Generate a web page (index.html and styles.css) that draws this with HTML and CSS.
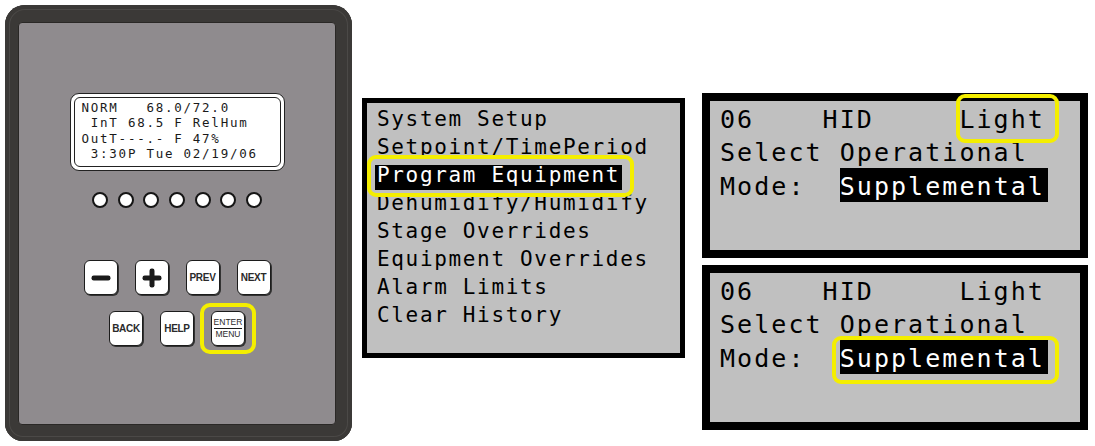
FILE: index.html
```html
<!DOCTYPE html>
<html lang="en">
<head>
<meta charset="utf-8">
<title>Controller menu</title>
<link rel="stylesheet" href="styles.css">
</head>
<body>
<div class="scene">
  <div class="device">
    <div class="face">
      <div class="lcd">
        <div class="lcd-in">NORM   68.0/72.0
 InT 68.5 F RelHum
OutT---.- F 47%
 3:30P Tue 02/19/06</div>
      </div>
      <div class="leds">
        <span class="led"></span><span class="led"></span><span class="led"></span><span class="led"></span><span class="led"></span><span class="led"></span><span class="led"></span>
      </div>
      <div class="keys">
        <div class="row">
          <div class="key"><svg width="20" height="20" viewBox="0 0 20 20"><rect x="0.5" y="7.5" width="19" height="5" rx="2.2" fill="#1a1a1a"/></svg></div>
          <div class="key"><svg width="20" height="20" viewBox="0 0 20 20"><rect x="0.5" y="7.5" width="19" height="5" rx="2.2" fill="#1a1a1a"/><rect x="7.5" y="0.5" width="5" height="19" rx="2.2" fill="#1a1a1a"/></svg></div>
          <div class="key">PREV</div>
          <div class="key">NEXT</div>
        </div>
        <div class="row">
          <div class="key">BACK</div>
          <div class="key">HELP</div>
          <div class="key sel"><span class="em"><span class="em-top">ENTER</span><span class="em-bot">MENU</span></span></div>
        </div>
      </div>
    </div>
  </div>

  <div class="menu">System Setup
Setpoint/TimePeriod
<span class="hl">Program Equipment</span>
Dehumidify/Humidify
Stage Overrides
Equipment Overrides
Alarm Limits
Clear History</div>

  <div class="right">
    <div class="scr">06    HID     <span class="mark">Light</span>
Select Operational
Mode:  <span class="hl">Supplemental</span></div>
    <div class="scr">06    HID     Light
Select Operational
Mode:  <span class="hl ring">Supplemental</span></div>
  </div>
</div>
</body>
</html>
```

FILE: styles.css
```css
* {
  box-sizing: border-box;
}

body {
  margin: 0;
  background: #ffffff;
  width: 1095px;
  height: 446px;
  overflow: hidden;
}

.scene {
  display: flex;
  align-items: flex-start;
  padding: 5px 0 0 5px;
}

/* ---------- controller device ---------- */
.device {
  width: 347px;
  height: 436px;
  flex: none;
  background: #3b3937;
  border-radius: 20px 20px 18px 18px;
  padding: 17px 16px 16px 13px;
  box-shadow: inset 0 0 0 4px #3b3937, inset 0 0 0 5px #4b4947;
}

.face {
  height: 100%;
  background: #8f8b8e;
  border: 1px solid #2a2826;
  border-radius: 4px;
  display: flex;
  flex-direction: column;
  align-items: center;
}

.lcd {
  margin-top: 70px;
  width: 215px;
  height: 78px;
  background: #ffffff;
  border: 1.5px solid #222222;
  border-radius: 9px;
  padding: 3px;
}

.lcd-in {
  height: 100%;
  border: 1.5px solid #222222;
  border-radius: 6px;
  padding: 1.5px 0 0 7px;
  font-family: "DejaVu Sans Mono", monospace;
  font-size: 12.5px;
  line-height: 15.5px;
  letter-spacing: 1.75px;
  color: #1a1a1a;
  white-space: pre;
}

.leds {
  display: flex;
  gap: 9.7px;
  margin-top: 21px;
}

.led {
  width: 16px;
  height: 16px;
  border-radius: 50%;
  background: #ffffff;
  border: 2px solid #151515;
}

.keys {
  margin-top: 52px;
  display: flex;
  flex-direction: column;
  align-items: center;
  gap: 16px;
}

.row {
  display: flex;
  gap: 17px;
}

.key {
  position: relative;
  width: 34px;
  height: 35px;
  background: #ffffff;
  border: 1.5px solid #1c1c1c;
  border-radius: 6px;
  box-shadow: 1px 1px 0 #333333;
  display: flex;
  align-items: center;
  justify-content: center;
  font-family: "Liberation Sans", Arial, sans-serif;
  font-size: 10px;
  font-weight: bold;
  letter-spacing: -0.3px;
  color: #2a2a2a;
}

.key.sel::after {
  content: "";
  position: absolute;
  left: -12.5px;
  right: -11.5px;
  top: -9.5px;
  bottom: -8.5px;
  border: 4px solid #f4ee00;
  border-radius: 10px;
}

.em {
  display: flex;
  flex-direction: column;
  align-items: center;
  font-size: 8.5px;
  font-weight: normal;
  letter-spacing: 0;
  line-height: 9px;
}

.em-top {
  border-bottom: 1.3px solid #1a1a1a;
  padding-bottom: 1px;
  margin-bottom: 1px;
}

/* ---------- menu screen ---------- */
.menu {
  flex: none;
  margin: 93px 0 0 10px;
  width: 323px;
  height: 260px;
  background: #c0c0c0;
  border: 5px solid #000000;
  padding: 2.4px 0 0 10px;
  font-family: "DejaVu Sans Mono", monospace;
  font-size: 21px;
  line-height: 28px;
  letter-spacing: 1.66px;
  color: #000000;
  white-space: pre;
}

.menu .hl {
  position: relative;
  display: inline-block;
  background: #000000;
  color: #ffffff;
  line-height: 21px;
  padding: 0 2px 4px 2px;
  margin: 0 0 -1px -2px;
}

.menu .hl::after {
  content: "";
  position: absolute;
  left: -8px;
  right: -12px;
  top: -10px;
  bottom: -7px;
  border: 4px solid #f4ee00;
  border-radius: 9px;
}

/* ---------- right screens ---------- */
.right {
  flex: none;
  margin: 88px 0 0 17px;
  width: 386px;
  display: flex;
  flex-direction: column;
  gap: 7px;
}

.scr {
  height: 165px;
  background: #c0c0c0;
  border: 8px solid #000000;
  padding: 1.6px 0 0 10px;
  font-family: "DejaVu Sans Mono", monospace;
  font-size: 25px;
  line-height: 33.5px;
  letter-spacing: 2.05px;
  color: #000000;
  white-space: pre;
}

.scr .hl {
  position: relative;
  display: inline-block;
  background: #000000;
  color: #ffffff;
  line-height: 29px;
  padding: 4px 3px 1px 0;
  margin-top: -2px;
}

.mark {
  position: relative;
}

.mark::after {
  content: "";
  position: absolute;
  left: -3.4px;
  right: -14px;
  top: -10.8px;
  bottom: -9.1px;
  border: 4px solid #f4ee00;
  border-radius: 9px;
}

.scr .hl.ring::after {
  content: "";
  position: absolute;
  left: -8px;
  right: -11px;
  top: -4px;
  bottom: -10px;
  border: 4px solid #f4ee00;
  border-radius: 9px;
}
```
